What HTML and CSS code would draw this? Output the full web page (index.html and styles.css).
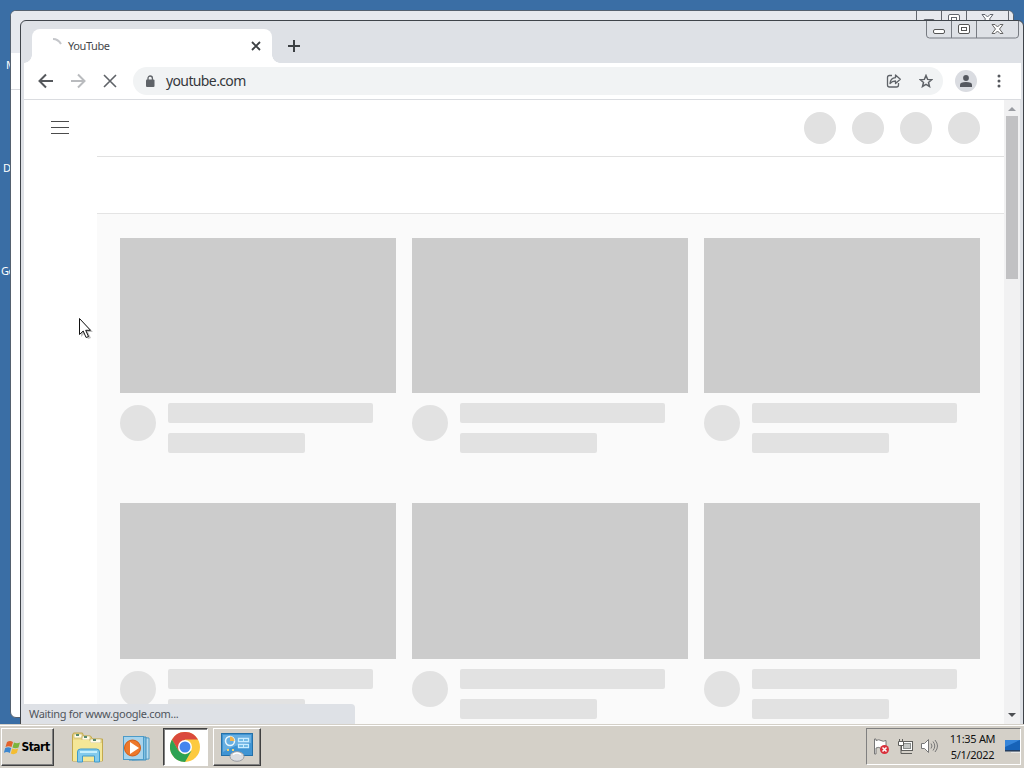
FILE: index.html
```html
<!DOCTYPE html>
<html lang="en">
<head>
    <meta charset="UTF-8">
    <meta name="viewport" content="width=device-width, initial-scale=1.0">
    <title>YouTube</title>
    <link rel="stylesheet" href="styles.css">
</head>
<body>
    <div class="desktop">
        <span class="desktop-label label-one">M</span>
        <span class="desktop-label label-two">D</span>
        <span class="desktop-label label-three">Go</span>

        <!-- Window behind -->
        <div class="window window-back">
            <div class="back-strip"></div>
            <div class="back-toolbar"></div>
            <div class="window-buttons">
                <svg width="100" height="18" viewBox="0 0 100 18" fill="none" stroke="#62666e">
                    <path d="M.5 0v14q0 3 3 3h86q3 0 3-3V0M25.500 0v17M50.500 0v17"/>
                    <rect x="7.500" y="8.500" width="11" height="4" rx="1.500" fill="#fff"/>
                    <rect x="32.500" y="3.500" width="11" height="9" rx="1.500" fill="#fff"/>
                    <rect x="35.500" y="6.500" width="5" height="3"/>
                    <path d="M66 3.500h3l2.500 2.500L74 3.500h3L73.500 8l3.500 4.500h-3L71.500 10 69 12.500h-3L69.500 8z" fill="#fff"/>
                </svg>
            </div>
        </div>

        <!-- Browser window -->
        <div class="window window-front">
            <div class="window-buttons">
                <svg width="94" height="18" viewBox="0 0 94 18" fill="none" stroke="#777b82">
                    <path d="M.5 0v14q0 3 3 3h86q3 0 3-3V0M25.500 0v17M50.500 0v17"/>
                    <rect x="7.500" y="8.500" width="11" height="4" rx="1.500" fill="#fff" stroke="#555"/>
                    <rect x="32.500" y="3.500" width="11" height="9" rx="1.500" fill="#fff" stroke="#555"/>
                    <rect x="35.500" y="6.500" width="5" height="3" stroke="#555"/>
                    <path d="M66 3.500h3l2.500 2.500L74 3.500h3L73.500 8l3.500 4.500h-3L71.500 10 69 12.500h-3L69.500 8z" fill="#fff" stroke="#666"/>
                </svg>
            </div>

            <div class="tab-strip">
                <div class="tab">
                    <svg class="spinner" width="16" height="16" viewBox="0 0 16 16" fill="none" stroke="#c4c6ca" stroke-width="2"><path d="M6 1Q11 1 14 6"/></svg>
                    <span class="tab-title">YouTube</span>
                    <svg width="10" height="10" viewBox="0 0 10 10" stroke="#3c4043" stroke-width="1.800"><path d="M1 1l8 8M9 1L1 9"/></svg>
                </div>
                <svg class="new-tab" width="12" height="12" viewBox="0 0 12 12" stroke="#3c4043" stroke-width="2"><path d="M6 0v12M0 6h12"/></svg>
            </div>

            <div class="toolbar">
                <svg class="nav-icon" width="16" height="16" viewBox="0 0 16 16" fill="none" stroke="#55585c" stroke-width="2"><path d="M15 8H2M8 1.500L1.500 8 8 14.500"/></svg>
                <svg class="nav-icon" width="16" height="16" viewBox="0 0 16 16" fill="none" stroke="#b9bbbe" stroke-width="2"><path d="M1 8h13M8 1.500L14.500 8 8 14.500"/></svg>
                <svg class="nav-icon stop" width="16" height="16" viewBox="0 0 16 16" fill="none" stroke="#5f6368" stroke-width="1.600"><path d="M2 2l12 12M14 2L2 14"/></svg>
                <div class="address-bar">
                    <svg width="10" height="13" viewBox="0 0 10 13"><rect x="1" y="4.500" width="8.500" height="7.500" rx="1" fill="#5f6368"/><path d="M3 5V3.200a2.200 2.200 0 0 1 4.400 0V5" fill="none" stroke="#5f6368" stroke-width="1.300"/></svg>
                    <span class="address">youtube.com</span>
                    <svg class="share" width="16" height="16" viewBox="0 0 16 16" fill="none" stroke="#5f6368" stroke-width="1.300"><path d="M6 2.500H3.500Q1.500 2.500 1.500 4.500v7.500q0 2 2 2h7q2 0 2-2v-2"/><path d="M4 10.500Q4.500 5 9.500 4.700V2l4.800 4.300-4.800 4.200V8Q6 8 4 10.500z" stroke-linejoin="round"/></svg>
                    <svg width="14" height="14" viewBox="0 0 14 14" fill="none" stroke="#5f6368" stroke-width="1.500"><path d="M7 1.500l1.600 3.900 4.100.3-3.200 2.700 1 4.100L7 10.300l-3.500 2.200 1-4.100L1.300 5.700l4.100-.3z"/></svg>
                </div>
                <div class="profile">
                    <svg width="12" height="12" viewBox="0 0 12 12" fill="#55585f"><circle cx="6" cy="3" r="2.900"/><path d="M0 12v-2.200Q0 7 6 7t6 2.800V12z"/></svg>
                </div>
                <svg width="4" height="14" viewBox="0 0 4 14" fill="#55585d"><circle cx="2" cy="2" r="1.500"/><circle cx="2" cy="7" r="1.500"/><circle cx="2" cy="12" r="1.500"/></svg>
            </div>

            <div class="viewport">
                <div class="guide">
                    <div class="menu"><span></span><span></span><span></span></div>
                </div>
                <div class="page">
                    <div class="masthead">
                        <i></i><i></i><i></i><i></i>
                    </div>
                    <div class="chips"></div>
                    <div class="feed" id="feed"></div>
                </div>
                <div class="scrollbar">
                    <svg width="16" height="16" viewBox="0 0 16 16"><path d="M4 11l4-4 4 4z" fill="#9a9ca1"/></svg>
                    <div class="thumb"></div>
                    <svg width="16" height="16" viewBox="0 0 16 16"><path d="M4 5l4 4 4-4z" fill="#4d4f53"/></svg>
                </div>
            </div>
            <div class="status">Waiting for www.google.com...</div>
        </div>

        <svg class="cursor" width="16" height="24" viewBox="0 0 16 24">
            <path d="M3 3v17l4-4 3 6 3-1-3-6h5z" fill="#000" opacity=".25"/>
            <path d="M1.500 1.500v16l3.700-3.500 2.900 6.500 2.400-1-2.800-6.200h4.800z" fill="#fff" stroke="#111"/>
        </svg>
    </div>

    <div class="taskbar">
        <div class="task-button start">
            <svg width="17" height="17" viewBox="0 0 17 17">
                <path d="M3 3q3-2 6 0L7.500 8q-3-1.500-6 0z" fill="#e2622b"/>
                <path d="M10 3.500q3 1.500 6 0L14.500 8.500q-3 1.500-6 0z" fill="#7bb53c"/>
                <path d="M1.200 9q3-1.500 6 0L5.800 14q-3-2-6 0z" fill="#3d87cf"/>
                <path d="M8.200 9.500q3 1.500 6 0L12.800 14q-3 2-6 .5z" fill="#f4bd32"/>
            </svg>
            <b>Start</b>
        </div>
        <div class="launcher">
            <svg width="34" height="32" viewBox="0 0 34 32">
                <path d="M2.500 29V3l1-2h9l1 3h7l2 3h10v22z" fill="#eedc86" stroke="#c2a94f"/>
                <path d="M4 2h8v4H4zM12 4h8v4h-8zM20 7h11v4H20z" fill="#fffbe8" stroke="#c5b46c" stroke-width=".7"/>
                <path d="M6 2h3v2H6zM14 4h3v2h-3zM23 7h3v2h-3z" fill="#55896d"/>
                <path d="M3 8h16l2 3h11v18H3z" fill="#f4e797"/>
                <path d="M7.500 30V20q0-3 3-3h16q3 0 3 3v10h-5v-6h-12v6z" fill="#82caec" stroke="#3e9bcb"/>
                <path d="M10 19h17v2H10z" fill="#c6effc"/>
            </svg>
        </div>
        <div class="launcher player">
            <svg width="30" height="28" viewBox="0 0 30 28">
                <path d="M10 2l17 1v21l-17 1z" fill="#b9ddf0" stroke="#4f9ac5"/>
                <path d="M7 2h17v23H7z" fill="#82bfe0" stroke="#3e8ebd"/>
                <rect x="1.500" y="1.500" width="20" height="23" fill="#a7d4ed" stroke="#4c9bc8"/>
                <circle cx="10.500" cy="13" r="8" fill="#ed782b" stroke="#d15d17"/>
                <path d="M8 7l9 6-9 6z" fill="#fff"/>
            </svg>
        </div>
        <div class="task-button active">
            <svg width="30" height="30" viewBox="0 0 30 30">
                <circle cx="15" cy="15" r="15" fill="#fcca3f"/>
                <path d="M2 7.500A15 15 0 0 1 28 7.500H15L8.500 19z" fill="#da4a3d"/>
                <path d="M2 7.500A15 15 0 0 0 15 30l6.500-11.200L15 22.500 8.500 18.800z" fill="#2da253"/>
                <circle cx="15" cy="15" r="7" fill="#fff"/>
                <circle cx="15" cy="15" r="5.500" fill="#4385ee"/>
            </svg>
        </div>
        <div class="task-button panel">
            <svg width="32" height="30" viewBox="0 0 32 30">
                <rect x=".5" y="1.500" width="31" height="22" fill="#3f94d3" stroke="#2470a8"/>
                <path d="M2 3h28v8Q14 12 2 20z" fill="#67aee0"/>
                <circle cx="9" cy="9" r="4.500" fill="none" stroke="#e8f6fc" stroke-width="1.500"/><path d="M9 9V4.500A4.500 4.500 0 0 1 13.500 9z" fill="#f3b34a"/>
                <path d="M17.500 6.500h10v3h-10zM17.500 12.500h10v3h-10z" fill="#55aadc" stroke="#c9ecff" stroke-width="1.300"/>
                <path d="M22.500 6.500v3M22.500 12.500v3" stroke="#c9ecff"/>
                <path d="M6 17h2v2H6zM11 17h2v2h-2z" fill="#f5d36b"/>
                <ellipse cx="16" cy="24.500" rx="7" ry="4.800" fill="#dadce0" stroke="#9b9da2"/>
                <path d="M12 22.500q4-3 8 0" fill="none" stroke="#fff" stroke-width="1.500"/>
            </svg>
        </div>

        <div class="tray">
            <svg width="17" height="17" viewBox="0 0 17 17">
                <path d="M1.500 1v15h1.500v-6q3-1.500 5 .5 2 1 5-.5V2.500q-3 1.500-5 0-2-1.500-5 0V1z" fill="#fff" stroke="#777"/>
                <circle cx="11.500" cy="11.500" r="4.500" fill="#d9303b"/>
                <path d="M9.500 9.500l4 4M13.500 9.500l-4 4" stroke="#fff" stroke-width="1.500"/>
            </svg>
            <svg width="17" height="17" viewBox="0 0 17 17" fill="#fff" stroke="#5f5f5c">
                <rect x="4.500" y="3.500" width="11" height="9"/>
                <rect x="6.500" y="5.500" width="7" height="5" fill="#c4c7c5" stroke="#8b8f8d"/>
                <path d="M7 15.500h8"/>
                <path d="M1.500 3.500h5v4h-5z"/>
                <path d="M2.500 1v3M5.500 1v3M4 8v7.500h3" fill="none"/>
            </svg>
            <svg width="17" height="17" viewBox="0 0 17 17" fill="none" stroke="#777">
                <path d="M.5 5.500h3l4-4v13l-4-4h-3z" fill="#fff"/>
                <path d="M10 5.500q2 2.500 0 5M12 3.500q3.500 4.500 0 9M14 2q5 6 0 12"/>
            </svg>
            <div class="clock">11:35 AM<br>5/1/2022</div>
            <svg class="show-desktop" width="15" height="14" viewBox="0 0 15 14">
                <path d="M0 0h15v10H0z" fill="#1763b8"/>
                <path d="M0 0h15L0 7z" fill="#3585da"/>
                <path d="M0 10h15v1.500H0z" fill="#223e62"/><path d="M6 12h9v1H6z" fill="#e7e7e5"/>
            </svg>
        </div>
    </div>

    <script>
        // Placeholder cards shown while the feed loads
        const feed = document.getElementById('feed');
        for (let i = 0; i < 6; i++) {
            const card = document.createElement('div');
            card.className = 'video';
            card.innerHTML = `
                <div class="preview"></div>
                <div class="details">
                    <div class="avatar"></div>
                    <div class="lines"><div class="line"></div><div class="line short"></div></div>
                </div>
            `;
            feed.appendChild(card);
        }
    </script>
</body>
</html>
```

FILE: styles.css
```css
* { box-sizing: border-box; }
body { margin: 0; width: 1024px; height: 768px; overflow: hidden; font-family: "Noto Sans", sans-serif; display: flex; flex-direction: column; }
svg { display: block; flex: none; }
.desktop { position: relative; height: 724px; background: #3a6ea5; overflow: hidden; }
.desktop-label { position: absolute; color: #fff; font-size: 11px; line-height: 14px; }
.label-one { left: 6px; top: 58px; }
.label-two { left: 3px; top: 161px; }
.label-three { left: 1px; top: 264px; letter-spacing: -0.5px; }

.window { position: absolute; }
.window-back { left: 10px; top: 10px; width: 1004px; height: 708px; background: #fff; border: 1px solid #55616f; border-radius: 6px; overflow: hidden; }
.back-strip { height: 42px; background: #e7e9ee; }
.back-toolbar { height: 37px; border-bottom: 1px solid #d9dbdf; }
.window-back .window-buttons { right: -3px; }
.window-front { left: 20px; top: 20px; width: 1004px; height: 710px; background: #dee1e6; border: 1px solid #3f444a; border-radius: 6px 6px 0 0; padding: 0 2px 0 3px; }
.window-buttons { position: absolute; top: 0; right: 3px; }

.tab-strip { height: 42px; padding: 8px 0 0 8px; display: flex; align-items: center; }
.tab { position: relative; width: 240px; height: 34px; padding: 0 11px 0 15px; display: flex; align-items: center; background: #fff; border-radius: 8px 8px 0 0; }
.tab::before, .tab::after { content: ""; position: absolute; bottom: 0; width: 8px; height: 8px; }
.tab::before { left: -8px; background: radial-gradient(circle at 0 0, #dee1e6 7.5px, #fff 8px); }
.tab::after { right: -8px; background: radial-gradient(circle at 100% 0, #dee1e6 7.5px, #fff 8px); }
.spinner { margin-right: 5px; }
.tab-title { flex: 1; padding-bottom: 2px; font-size: 11px; letter-spacing: -0.4px; color: #45484b; }
.new-tab { margin-left: 16px; }

.toolbar { height: 37px; padding: 0 20px 0 14px; display: flex; align-items: center; background: #fff; border-bottom: 1px solid #dadce0; }
.nav-icon { margin-right: 16px; }
.stop { margin-right: 15px; }
.address-bar { width: 810px; height: 28px; margin-right: 12px; padding: 0 10px 0 12px; display: flex; align-items: center; background: #f1f3f4; border-radius: 14px; }
.address { flex: 1; margin-left: 11px; padding-bottom: 1px; font-size: 14px; letter-spacing: -0.62px; color: #35383c; }
.share { margin-right: 17px; }
.profile { width: 22px; height: 22px; margin-right: auto; display: flex; align-items: center; justify-content: center; background: #dadce1; border-radius: 50%; }

.viewport { width: 996px; height: 624px; display: flex; background: #fff; overflow: hidden; }
.guide { width: 73px; padding: 21px 0 0 27px; }
.menu { width: 18px; }
.menu span { display: block; height: 1px; margin-bottom: 5px; background: #4b4b4b; }
.page { width: 907px; }
.masthead { height: 57px; padding: 12px 24px 0 0; display: flex; justify-content: flex-end; gap: 16px; border-bottom: 1px solid #e1e1e1; }
.masthead i { width: 32px; height: 32px; border-radius: 50%; background: #e1e1e1; }
.chips { height: 57px; border-bottom: 1px solid #e4e4e4; }
.feed { height: 530px; padding: 24px 24px 0 23px; display: grid; grid-template-columns: repeat(3, 276px); grid-auto-rows: 265.4px; gap: 0 16px; background: #fafafa; }
.preview { height: 155.250px; background: #ccc; }
.details { display: flex; padding-top: 10px; }
.avatar { width: 36px; height: 36px; margin: 2px 12px 0 0; border-radius: 50%; background: #e2e2e2; }
.line { width: 205px; height: 20px; margin-bottom: 10px; border-radius: 2px; background: #e2e2e2; }
.short { width: 137px; }
.scrollbar { width: 16px; height: 624px; display: flex; flex-direction: column; background: #f1f1f2; }
.thumb { width: 12px; height: 163px; margin: 0 2px auto; background: #c1c1c3; }
.status { position: absolute; left: 3px; top: 683px; width: 331px; height: 21px; padding-left: 5px; background: #dee1e6; border-radius: 0 4px 0 0; font-size: 11px; line-height: 20px; letter-spacing: -0.31px; color: #50555c; }
.cursor { position: absolute; left: 78px; top: 317px; }

.taskbar { height: 44px; padding: 3px 3px 3px 1px; display: flex; background: #d4d0c8; border-top: 1px solid #d4d0c8; box-shadow: inset 0 1px #fff; }
.task-button { height: 38px; display: flex; align-items: center; justify-content: center; border: 1px solid; border-color: #fff #404040 #404040 #fff; box-shadow: inset -1px -1px #808080; }
.start { width: 53px; padding-right: 1px; font: 12px "DejaVu Sans Condensed", "DejaVu Sans", sans-serif; letter-spacing: -0.5px; }
.launcher { width: 34px; margin-left: 16px; padding-top: 4px; }
.player { margin-left: 18px; padding-top: 7px; }
.active { width: 45px; margin-left: 7px; padding-right: 2px; background: #fff; border-color: #404040 #fff #fff #404040; box-shadow: inset 1px 1px #808080; }
.panel { width: 48px; margin-left: 5px; }
.tray { width: 155px; margin-left: auto; padding-left: 6px; display: flex; align-items: center; gap: 7px; border: 1px solid; border-color: #808080 #fff #fff #808080; }
.clock { width: 52px; margin-left: 3px; text-align: center; font-size: 11px; line-height: 16px; letter-spacing: -0.3px; white-space: nowrap; color: #111; }
.show-desktop { margin-left: 1px; }
```
